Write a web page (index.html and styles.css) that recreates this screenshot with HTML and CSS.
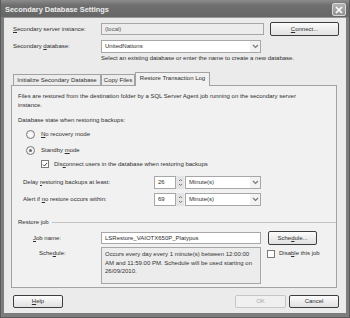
FILE: index.html
```html
<!DOCTYPE html>
<html>
<head>
<meta charset="utf-8">
<title>Secondary Database Settings</title>
<link rel="stylesheet" href="styles.css">
</head>
<body>
<div class="win">
  <div class="titlebar">
    <span class="title">Secondary Database Settings</span>
    <span class="close"><svg width="8" height="8" viewBox="0 0 8 8"><path d="M1 1L7 7M7 1L1 7" stroke="#fff" stroke-width="1.7"/></svg></span>
  </div>
  <div class="client">
    <div class="row r1">
      <span class="lbl"><u>S</u>econdary server instance:</span>
      <span class="field dis w165">(local)</span>
      <span class="btn connect"><u>C</u>onnect...</span>
    </div>
    <div class="row r2">
      <span class="lbl">Secondary <u>d</u>atabase:</span>
      <span class="combo w160"><span class="ctext">UnitedNations</span><span class="drop"><svg width="7" height="5" viewBox="0 0 7 5"><path d="M1 1L3.5 3.5L6 1" fill="none" stroke="#777" stroke-width="1.2"/></svg></span></span>
    </div>
    <div class="hint">Select an existing database or enter the name to create a new database.</div>
    <div class="tabs">
      <span class="tab t1">Initialize Secondary Database</span>
      <span class="tab t2">Copy Files</span>
      <span class="tab t3 sel">Restore Transaction Log</span>
    </div>
    <div class="panel">
      <p class="desc">Files are restored from the destination folder by a SQL Server Agent job running on the secondary server<br>instance.</p>
      <p class="state">Database state when restoring backups:</p>
      <div class="opt radio1"><span class="radio"></span><span><u>N</u>o recovery mode</span></div>
      <div class="opt radio2"><span class="radio on"></span><span>Standby <u>m</u>ode</span></div>
      <div class="opt check1"><span class="check on"><svg width="7" height="7" viewBox="0 0 7 7"><path d="M1.2 3.6L2.8 5.2L5.8 1.8" fill="none" stroke="#333" stroke-width="1.1"/></svg></span><span>Dis<u>c</u>onnect users in the database when restoring backups</span></div>
      <div class="trow delay">
        <span class="tlbl">Delay <u>r</u>estoring backups at least:</span>
        <span class="spin"><span class="sval">26</span><span class="sbtn"><svg width="7" height="11" viewBox="0 0 7 11"><path d="M2 4L3.5 2.5L5 4M2 7L3.5 8.5L5 7" fill="none" stroke="#666" stroke-width="0.9"/></svg></span></span>
        <span class="combo w76"><span class="ctext">Minute(s)</span><span class="drop"><svg width="7" height="5" viewBox="0 0 7 5"><path d="M1 1L3.5 3.5L6 1" fill="none" stroke="#777" stroke-width="1.2"/></svg></span></span>
      </div>
      <div class="trow alert">
        <span class="tlbl">Alert if <u>n</u>o restore occurs within:</span>
        <span class="spin"><span class="sval">69</span><span class="sbtn"><svg width="7" height="11" viewBox="0 0 7 11"><path d="M2 4L3.5 2.5L5 4M2 7L3.5 8.5L5 7" fill="none" stroke="#666" stroke-width="0.9"/></svg></span></span>
        <span class="combo w76"><span class="ctext">Minute(s)</span><span class="drop"><svg width="7" height="5" viewBox="0 0 7 5"><path d="M1 1L3.5 3.5L6 1" fill="none" stroke="#777" stroke-width="1.2"/></svg></span></span>
      </div>
      <div class="group"><span class="gtitle">Restore job</span><span class="gline"></span></div>
      <div class="jrow">
        <span class="jlbl"><u>J</u>ob name:</span>
        <span class="field w160 jfield">LSRestore_VAIOTX650P_Platypus</span>
        <span class="btn sched">Sche<u>d</u>ule...</span>
      </div>
      <div class="srow">
        <span class="slbl">Sche<u>d</u>ule:</span>
        <span class="area">Occurs every day every 1 minute(s) between 12:00:00<br>AM and 11:59:00 PM. Schedule will be used starting on<br>26/09/2010.</span>
        <span class="dis-job"><span class="check"></span><span>Disa<u>b</u>le this job</span></span>
      </div>
    </div>
    <div class="footer">
      <span class="btn help"><u>H</u>elp</span>
      <span class="spacer"></span>
      <span class="btn ok off">OK</span>
      <span class="btn cancel">Cancel</span>
    </div>
  </div>
</div>
</body>
</html>
```

FILE: styles.css
```css
* { box-sizing: border-box; }
html, body { margin: 0; padding: 0; }
body {
  font: 6px/9px "Liberation Sans", Arial, sans-serif;
  color: #2e2e2e;
  background: #fff;
}
u { text-decoration: underline; text-underline-offset: 1px; }
p { margin: 0; }

.win {
  width: 350px;
  height: 318px;
  background: #7d7d7d;
  padding: 0 3px 4px 3px;
  border-left: 1px solid #5a5a5a;
  border-right: 1px solid #5a5a5a;
  border-bottom: 1px solid #5a5a5a;
  display: flex;
  flex-direction: column;
}
.titlebar {
  height: 17px;
  margin: 0 -3px;
  background: linear-gradient(#8c8c8c, #6f6f6f 30%, #666 100%);
  display: flex;
  align-items: center;
  padding: 0 3px 0 4px;
  flex-shrink: 0;
}
.title {
  font-weight: bold;
  font-size: 7.4px;
  color: #ededed;
  flex: 1;
  padding-top: 1px;
}
.close {
  width: 14px;
  height: 13px;
  margin-top: 2px;
  background: linear-gradient(#b4b4b4, #929292);
  border: 1px solid #d8d8d8;
  border-radius: 2px;
  display: flex;
  align-items: center;
  justify-content: center;
}

.client {
  flex: 1;
  background: #ebebeb;
  padding: 0 9px 0 7px;
  display: flex;
  flex-direction: column;
  border-top: 1px solid #9a9a9a;
}

.row {
  display: flex;
  align-items: center;
  height: 14px;
  padding-left: 2px;
  margin-right: -2px;
}
.r1 { margin-top: 4px; }
.r2 { margin-top: 3px; }
.lbl { width: 88px; flex-shrink: 0; }

.field {
  height: 12px;
  border: 1px solid #a7a7a7;
  background: #fff;
  padding-left: 3px;
  display: flex;
  align-items: center;
  white-space: nowrap;
  overflow: hidden;
}
.field.dis { background: #ececec; color: #555; }
.w165 { width: 165px; }
.w160 { width: 160px; }
.w76 { width: 76px; }

.combo {
  height: 13px;
  border: 1px solid #a7a7a7;
  background: #fff;
  display: flex;
  align-items: center;
  padding-left: 3px;
}
.ctext { flex: 1; white-space: nowrap; }
.drop {
  width: 10px;
  height: 11px;
  display: flex;
  align-items: center;
  justify-content: center;
  background: #f2f2f2;
}

.btn {
  height: 14px;
  border: 1px solid #3d3d3d;
  border-radius: 2px;
  background: linear-gradient(#fdfdfd, #ececec 55%, #e2e2e2);
  display: flex;
  align-items: center;
  justify-content: center;
  white-space: nowrap;
  flex-shrink: 0;
}
.connect { width: 69px; margin-left: 6px; }

.hint {
  margin-top: 1px;
  padding-left: 90px;
  height: 9px;
  white-space: nowrap;
}

.tabs {
  margin-top: 9px;
  height: 14px;
  display: flex;
  align-items: flex-end;
  padding-left: 2px;
}
.tab {
  height: 12px;
  border: 1px solid #a2a2a2;
  border-bottom: none;
  background: #ececec;
  display: flex;
  align-items: center;
  justify-content: center;
  white-space: nowrap;
  border-radius: 1px 1px 0 0;
}
.t1 { width: 88px; }
.t2 { width: 34px; }
.t3 { width: 75px; }
.tab.sel {
  height: 14px;
  background: #f1f1f1;
  position: relative;
  z-index: 1;
  padding-bottom: 2px;
}

.panel {
  margin-top: -1px;
  height: 203px;
  border: 1px solid #a2a2a2;
  background: #f1f1f1;
  padding: 6px 0 0 6px;
  display: flex;
  flex-direction: column;
}
.desc { line-height: 9px; white-space: nowrap; }
.state { margin-top: 6px; height: 9px; }

.opt {
  display: flex;
  align-items: center;
  height: 10px;
  white-space: nowrap;
}
.radio1 { margin-top: 4px; padding-left: 8px; }
.radio2 { margin-top: 6px; padding-left: 8px; }
.check1 { margin-top: 4px; padding-left: 23px; }
.radio {
  width: 9px;
  height: 9px;
  border-radius: 50%;
  border: 1px solid #7a7a7a;
  background: radial-gradient(#fff, #e9e9e9);
  margin-right: 6px;
  display: flex;
  align-items: center;
  justify-content: center;
}
.radio.on::after {
  content: "";
  width: 3px;
  height: 3px;
  border-radius: 50%;
  background: #6a6a6a;
}
.check {
  width: 8px;
  height: 8px;
  border: 1px solid #7a7a7a;
  background: #fff;
  margin-right: 5px;
  display: flex;
  align-items: center;
  justify-content: center;
  flex-shrink: 0;
}
.check svg { display: block; }

.trow {
  display: flex;
  align-items: center;
  height: 13px;
  padding-left: 5px;
}
.delay { margin-top: 7px; }
.alert { margin-top: 4px; }
.tlbl { width: 131px; flex-shrink: 0; white-space: nowrap; }
.spin {
  display: flex;
  height: 13px;
  width: 30px;
  margin-right: 1px;
}
.sval {
  width: 22px;
  border: 1px solid #a7a7a7;
  background: #fff;
  padding-left: 3px;
  display: flex;
  align-items: center;
}
.sbtn {
  width: 8px;
  display: flex;
  align-items: center;
  justify-content: center;
  background: #e4e4e4;
}

.group {
  margin-top: 12px;
  height: 9px;
  display: flex;
  align-items: center;
}
.gtitle { white-space: nowrap; margin-right: 3px; }
.gline { flex: 1; height: 1px; background: #c4c4c4; }

.jrow {
  margin-top: 4px;
  height: 14px;
  display: flex;
  align-items: center;
  padding-left: 15px;
}
.jlbl { width: 68px; flex-shrink: 0; }
.sched { width: 49px; margin-left: 7px; }

.srow {
  margin-top: 2px;
  display: flex;
  align-items: flex-start;
  padding-left: 21px;
}
.slbl { width: 62px; flex-shrink: 0; padding-top: 2px; }
.area {
  width: 160px;
  height: 37px;
  border: 1px solid #a7a7a7;
  background: #ececec;
  padding: 2px 0 0 3px;
  line-height: 8.5px;
  white-space: nowrap;
  color: #333;
}
.dis-job {
  display: flex;
  align-items: center;
  margin-left: 6px;
  padding-top: 2px;
  white-space: nowrap;
}
.dis-job .check { margin-right: 4px; }

.footer {
  margin-top: 7px;
  height: 13px;
  display: flex;
  padding-left: 2px;
  margin-right: -2px;
}
.footer .btn { height: 13px; }
.help { width: 50px; }
.spacer { flex: 1; }
.ok { width: 51px; margin-right: 3px; }
.ok.off { border-color: #c6c6c6; color: #a8a8a8; background: #f0f0f0; }
.cancel { width: 50px; }
```
